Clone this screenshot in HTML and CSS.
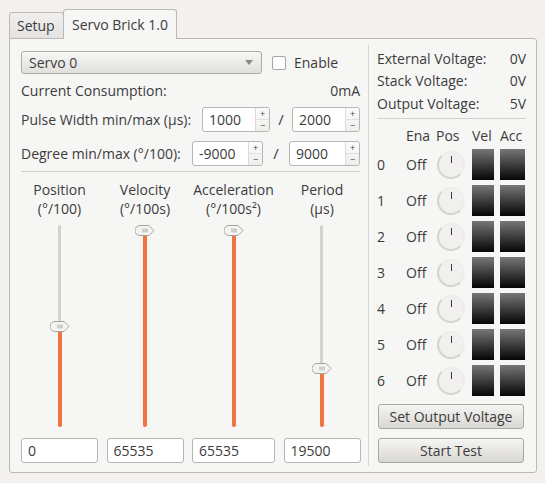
FILE: index.html
```html
<!DOCTYPE html>
<html>
<head>
<meta charset="utf-8">
<link rel="stylesheet" href="styles.css">
</head>
<body>
<div class="tabs">
  <div class="tab">Setup</div>
  <div class="tab active">Servo Brick 1.0</div>
</div>
<div class="panel">
  <div class="left">
    <div class="row r1">
      <div class="combo"><span>Servo 0</span><span class="arrow"></span></div>
      <label class="check"><span class="box"></span>Enable</label>
    </div>
    <div class="row r2"><span>Current Consumption:</span><span>0mA</span></div>
    <div class="row r3">
      <span class="lbl">Pulse Width min/max (µs):</span>
      <div class="spin w68"><span class="val">1000</span><span class="btns"><i>+</i><i>−</i></span></div>
      <span class="slash">/</span>
      <div class="spin w68"><span class="val">2000</span><span class="btns"><i>+</i><i>−</i></span></div>
    </div>
    <div class="row r4">
      <span class="lbl">Degree min/max (°/100):</span>
      <div class="spin w71"><span class="val">-9000</span><span class="btns"><i>+</i><i>−</i></span></div>
      <span class="slash wide">/</span>
      <div class="spin w71"><span class="val">9000</span><span class="btns"><i>+</i><i>−</i></span></div>
    </div>
    <div class="hr"></div>
    <div class="sliders">
      <div class="col">
        <div class="head">Position<br>(°/100)</div>
        <div class="slider"><div class="fill" style="top:105px"></div><div class="handle" style="top:96px"><svg width="20" height="11" viewBox="0 0 20 11"><path d="M5 0.5 H14 L19 5.5 L14 10.5 H5 A5 5 0 0 1 5 0.5 Z" fill="#f4f4f3" stroke="#a6a39f"/><path d="M8 3.5v4M10 3.5v4M12 3.5v4" stroke="#9a9894" stroke-width="0.8"/></svg></div></div>
        <div class="entry">0</div>
      </div>
      <div class="col">
        <div class="head">Velocity<br>(°/100s)</div>
        <div class="slider"><div class="fill" style="top:9px"></div><div class="handle" style="top:0px"><svg width="20" height="11" viewBox="0 0 20 11"><path d="M5 0.5 H14 L19 5.5 L14 10.5 H5 A5 5 0 0 1 5 0.5 Z" fill="#f4f4f3" stroke="#a6a39f"/><path d="M8 3.5v4M10 3.5v4M12 3.5v4" stroke="#9a9894" stroke-width="0.8"/></svg></div></div>
        <div class="entry">65535</div>
      </div>
      <div class="col">
        <div class="head">Acceleration<br>(°/100s²)</div>
        <div class="slider"><div class="fill" style="top:9px"></div><div class="handle" style="top:0px"><svg width="20" height="11" viewBox="0 0 20 11"><path d="M5 0.5 H14 L19 5.5 L14 10.5 H5 A5 5 0 0 1 5 0.5 Z" fill="#f4f4f3" stroke="#a6a39f"/><path d="M8 3.5v4M10 3.5v4M12 3.5v4" stroke="#9a9894" stroke-width="0.8"/></svg></div></div>
        <div class="entry">65535</div>
      </div>
      <div class="col">
        <div class="head">Period<br>(µs)</div>
        <div class="slider"><div class="fill" style="top:148px"></div><div class="handle" style="top:138px"><svg width="20" height="11" viewBox="0 0 20 11"><path d="M5 0.5 H14 L19 5.5 L14 10.5 H5 A5 5 0 0 1 5 0.5 Z" fill="#f4f4f3" stroke="#a6a39f"/><path d="M8 3.5v4M10 3.5v4M12 3.5v4" stroke="#9a9894" stroke-width="0.8"/></svg></div></div>
        <div class="entry">19500</div>
      </div>
    </div>
  </div>
  <div class="vsep"></div>
  <div class="right">
    <div class="vrow"><span>External Voltage:</span><span>0V</span></div>
    <div class="vrow"><span>Stack Voltage:</span><span>0V</span></div>
    <div class="vrow"><span>Output Voltage:</span><span>5V</span></div>
    <div class="hr2"></div>
    <div class="grid">
      <span></span><span class="h">Ena</span><span class="h">Pos</span><span class="h">Vel</span><span class="h">Acc</span>
      <span class="n">0</span><span class="off">Off</span><span class="knob"></span><span class="sq"></span><span class="sq"></span>
      <span class="n">1</span><span class="off">Off</span><span class="knob"></span><span class="sq"></span><span class="sq"></span>
      <span class="n">2</span><span class="off">Off</span><span class="knob"></span><span class="sq"></span><span class="sq"></span>
      <span class="n">3</span><span class="off">Off</span><span class="knob"></span><span class="sq"></span><span class="sq"></span>
      <span class="n">4</span><span class="off">Off</span><span class="knob"></span><span class="sq"></span><span class="sq"></span>
      <span class="n">5</span><span class="off">Off</span><span class="knob"></span><span class="sq"></span><span class="sq"></span>
      <span class="n">6</span><span class="off">Off</span><span class="knob"></span><span class="sq"></span><span class="sq"></span>
    </div>
    <div class="btn b1">Set Output Voltage</div>
    <div class="btn b2">Start Test</div>
  </div>
</div>
</body>
</html>
```
FILE: styles.css
```css
* { box-sizing: border-box; }
body {
  margin: 0;
  padding: 9px 9px 0 9px;
  background: #f2f1f0;
  font-family: "Open Sans", "DejaVu Sans", sans-serif;
  font-size: 14px;
  color: #3c3c3c;
  width: 545px;
  height: 483px;
}
.tabs { display: flex; align-items: flex-end; height: 29px; }
.tab {
  height: 26px;
  padding: 0 7px;
  border: 1px solid #bcb9b5;
  border-bottom: none;
  border-radius: 3px 3px 0 0;
  background: linear-gradient(#f0efee, #e4e3e1);
  display: flex; align-items: center;
  width: 55px;
}
.tab.active {
  height: 30px;
  width: 114px;
  margin-left: -1px;
  margin-bottom: -1px;
  background: #f6f6f5;
  position: relative;
  z-index: 1;
  padding-left: 8px;
}
.panel {
  width: 528px;
  height: 435px;
  border: 1px solid #bcb9b5;
  border-radius: 0 3px 3px 3px;
  background: #f6f6f5;
  display: flex;
}
.left { width: 357px; padding: 12px 7px 0 11px; display: flex; flex-direction: column; }
.vsep { width: 1px; background: #d8d6d3; margin: 6px 0 6px 1px; }
.right { width: 167px; padding: 8px 10px 0 8px; display: flex; flex-direction: column; }
.row { display: flex; align-items: center; }
.r1 { height: 23px; }
.combo {
  width: 241px; height: 23px; flex: none;
  border: 1px solid #aeaca8; border-radius: 3px;
  background: linear-gradient(#f7f7f6, #e0dfdc);
  display: flex; align-items: center; justify-content: space-between;
  padding: 0 8px 0 7px;
}
.arrow { width: 0; height: 0; border-left: 4px solid transparent; border-right: 4px solid transparent; border-top: 5px solid #8a8884; }
.check { display: flex; align-items: center; margin-left: 10px; }
.box { width: 14px; height: 14px; border: 1px solid #a8a6a2; border-radius: 2px; background: #fff; margin-right: 8px; }
.r2 { height: 28px; justify-content: space-between; padding-top: 5px; }
.r3 { height: 34px; }
.r4 { height: 34px; }
.lbl { flex: 1; white-space: nowrap; }
.spin {
  height: 25px; flex: none;
  border: 1px solid #b8b5b2; border-radius: 3px;
  background: #fff;
  display: flex;
}
.w68 { width: 68px; }
.w71 { width: 71px; }
.val { flex: 1; padding-left: 6px; display: flex; align-items: center; }
.btns { width: 14px; border-left: 1px solid #dddbd8; display: flex; flex-direction: column; background: linear-gradient(#fbfbfb, #efeeec); border-radius: 0 3px 3px 0; }
.btns i { flex: 1; font-style: normal; font-size: 9px; line-height: 9px; color: #444; display: flex; align-items: center; justify-content: center; }
.btns i + i { border-top: 1px solid #e3e1de; }
.slash { width: 22px; text-align: center; font-size: 15px; flex: none; }
.slash.wide { width: 26px; }
.hr { height: 1px; background: #d3d1ce; margin-top: 1px; }
.sliders { display: grid; grid-template-columns: 77px 77px 83px 77px; column-gap: 8.5px; margin-top: 8px; }
.col { display: flex; flex-direction: column; align-items: center; }
.head { text-align: center; line-height: 19px; height: 38px; white-space: nowrap; }
.slider { position: relative; width: 20px; height: 202px; margin-top: 7px; }
.slider::before { content: ""; position: absolute; left: 8px; width: 3px; top: 0; bottom: 0; background: #d3d1ce; border-radius: 2px; }
.fill { position: absolute; left: 8px; width: 4px; bottom: 0; background: #ef7444; border-radius: 2px; }
.handle { position: absolute; left: 0; height: 11px; }
.handle svg { display: block; }
.entry {
  width: 100%; height: 25px; margin-top: 11px;
  border: 1px solid #b8b5b2; border-radius: 3px; background: #fff;
  padding-left: 6px; display: flex; align-items: center;
}
.vrow { display: flex; justify-content: space-between; height: 22.5px; align-items: center; }
.hr2 { height: 1px; background: #d3d1ce; margin: 3px 0 6px; }
.grid {
  display: grid;
  grid-template-columns: 29px 30px 36px 28px 25px;
  grid-template-rows: 22px repeat(7, 36px);
  align-items: center;
}
.knob {
  width: 28px; height: 28px; border-radius: 50%;
  background: #f1f0ef;
  border: 2px solid;
  border-color: #eeedeb #eeedeb #d6d4d1 #d6d4d1;
  position: relative;
  margin-left: 1px;
}
.knob::after { content: ""; position: absolute; left: 11.5px; top: 3px; width: 1.5px; height: 7px; background: #3a3a3a; }
.sq { width: 22px; height: 31px; background: linear-gradient(#777, #050505); }
.sq + .sq { width: 25px; }
.btn {
  height: 25px; margin-left: 1px; width: 146px;
  border: 1px solid #a9a7a3; border-radius: 3px;
  background: linear-gradient(#f5f5f4, #d9d7d2);
  display: flex; align-items: center; justify-content: center;
}
.b1 { margin-top: 5px; }
.b2 { margin-top: 9px; }
```
